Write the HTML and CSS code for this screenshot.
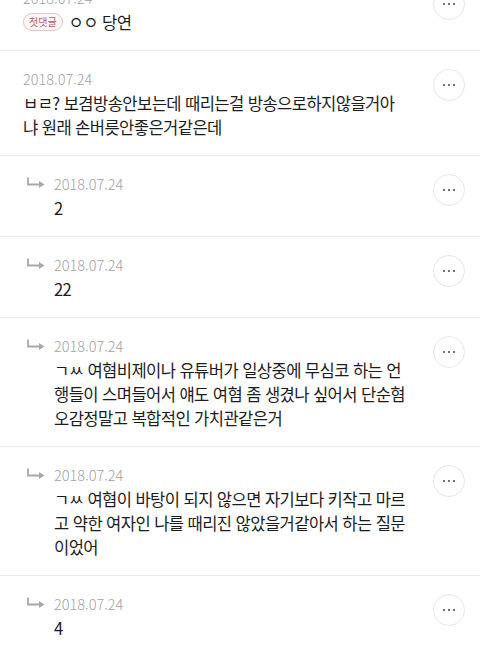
FILE: index.html
```html
<!DOCTYPE html>
<html lang="ko">
<head>
<meta charset="utf-8">
<link rel="stylesheet" href="styles.css">
</head>
<body>
<div class="list">
  <div class="item">
    <div class="content">
      <div class="date">2018.07.24</div>
      <div class="text"><span class="badge">첫댓글</span>ㅇㅇ 당연</div>
    </div>
    <div class="more"><span></span><span></span><span></span></div>
  </div>

  <div class="item">
    <div class="content">
      <div class="date">2018.07.24</div>
      <div class="text">ㅂㄹ? 보겸방송안보는데 때리는걸 방송으로하지않을거아<br>냐 원래 손버릇안좋은거같은데</div>
    </div>
    <div class="more"><span></span><span></span><span></span></div>
  </div>

  <div class="item reply">
    <div class="arrow"><svg width="20" height="24" viewBox="0 0 20 24"><path d="M1 5.5V12.5H12.5" fill="none" stroke="#a8a8a8" stroke-width="1.8"/><path d="M12 9L17.5 12.5L12 16Z" fill="#a8a8a8"/></svg></div>
    <div class="content">
      <div class="date">2018.07.24</div>
      <div class="text">2</div>
    </div>
    <div class="more"><span></span><span></span><span></span></div>
  </div>

  <div class="item reply">
    <div class="arrow"><svg width="20" height="24" viewBox="0 0 20 24"><path d="M1 5.5V12.5H12.5" fill="none" stroke="#a8a8a8" stroke-width="1.8"/><path d="M12 9L17.5 12.5L12 16Z" fill="#a8a8a8"/></svg></div>
    <div class="content">
      <div class="date">2018.07.24</div>
      <div class="text">22</div>
    </div>
    <div class="more"><span></span><span></span><span></span></div>
  </div>

  <div class="item reply">
    <div class="arrow"><svg width="20" height="24" viewBox="0 0 20 24"><path d="M1 5.5V12.5H12.5" fill="none" stroke="#a8a8a8" stroke-width="1.8"/><path d="M12 9L17.5 12.5L12 16Z" fill="#a8a8a8"/></svg></div>
    <div class="content">
      <div class="date">2018.07.24</div>
      <div class="text">ㄱㅆ 여혐비제이나 유튜버가 일상중에 무심코 하는 언<br>행들이 스며들어서 얘도 여혐 좀 생겼나 싶어서 단순혐<br>오감정말고 복합적인 가치관같은거</div>
    </div>
    <div class="more"><span></span><span></span><span></span></div>
  </div>

  <div class="item reply">
    <div class="arrow"><svg width="20" height="24" viewBox="0 0 20 24"><path d="M1 5.5V12.5H12.5" fill="none" stroke="#a8a8a8" stroke-width="1.8"/><path d="M12 9L17.5 12.5L12 16Z" fill="#a8a8a8"/></svg></div>
    <div class="content">
      <div class="date">2018.07.24</div>
      <div class="text">ㄱㅆ 여혐이 바탕이 되지 않으면 자기보다 키작고 마르<br>고 약한 여자인 나를 때리진 않았을거같아서 하는 질문<br>이었어</div>
    </div>
    <div class="more"><span></span><span></span><span></span></div>
  </div>

  <div class="item reply">
    <div class="arrow"><svg width="20" height="24" viewBox="0 0 20 24"><path d="M1 5.5V12.5H12.5" fill="none" stroke="#a8a8a8" stroke-width="1.8"/><path d="M12 9L17.5 12.5L12 16Z" fill="#a8a8a8"/></svg></div>
    <div class="content">
      <div class="date">2018.07.24</div>
      <div class="text">4</div>
    </div>
    <div class="more"><span></span><span></span><span></span></div>
  </div>
</div>
</body>
</html>
```

FILE: styles.css
```css
html, body {
  margin: 0;
  padding: 0;
  background: #ffffff;
}
body {
  width: 480px;
  height: 654px;
  overflow: hidden;
  font-family: "Noto Sans CJK KR", "Noto Sans", sans-serif;
  color: #1c1c1c;
}
.list {
  margin-top: -30px;
}
.item {
  display: flex;
  align-items: flex-start;
  padding: 16px 15px 16px 23px;
  border-bottom: 1.5px solid #ececec;
}
.item.reply {
  padding-left: 27px;
}
.arrow {
  width: 27px;
  flex: none;
  height: 24px;
}
.arrow svg {
  display: block;
}
.content {
  flex: 1;
  min-width: 0;
}
.date {
  font-family: "Noto Sans CJK KR", "Noto Sans", sans-serif;
  font-weight: 300;
  font-size: 14.5px;
  line-height: 24px;
  color: #a2a2a2;
  height: 24px;
}
.text {
  font-size: 16.6px;
  line-height: 24px;
  color: #1c1c1c;
  white-space: nowrap;
  letter-spacing: -0.6px;
}
.badge {
  display: inline-block;
  vertical-align: top;
  margin-top: 3px;
  height: 16px;
  line-height: 16px;
  padding: 0 5px;
  border: 1px solid #e3c6c9;
  border-radius: 9px;
  background: #fdf6f6;
  color: #b0626c;
  font-size: 10px;
  letter-spacing: 0;
  margin-right: 6px;
}
.more {
  flex: none;
  width: 30px;
  height: 30px;
  margin-top: 2px;
  border: 1px solid #e6e6e6;
  border-radius: 50%;
  display: flex;
  align-items: center;
  justify-content: center;
  gap: 2.5px;
}
.more span {
  width: 2.5px;
  height: 2.5px;
  border-radius: 50%;
  background: #444444;
}
```
